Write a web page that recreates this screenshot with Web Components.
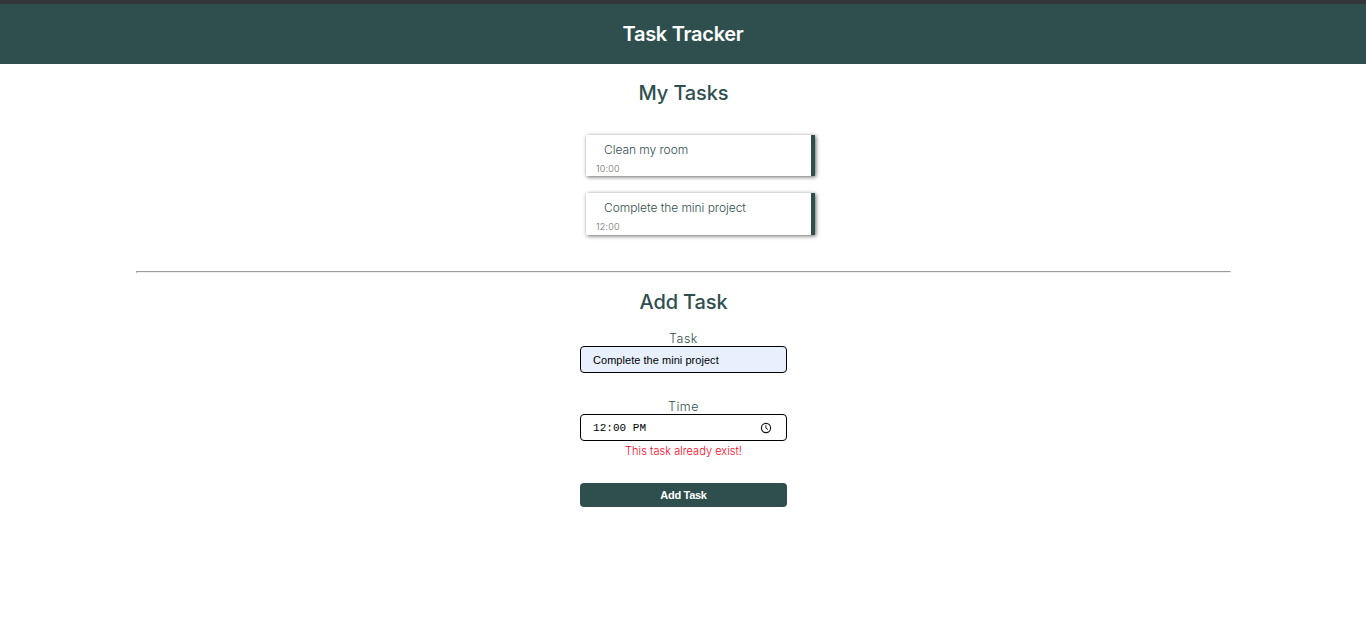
<!DOCTYPE html>
<html lang="en">
<head>
<meta charset="utf-8">
<title>Task Tracker</title>
<style>
body { margin: 0; background: #fff; color: darkslategray; font-family: Inter, "Liberation Sans", sans-serif; }
</style>
</head>
<body>
<task-app></task-app>
<script>
function define(name, html) {
  const template = document.createElement('template');
  template.innerHTML = html;
  customElements.define(name, class extends HTMLElement {
    constructor() {
      super();
      this.attachShadow({ mode: 'open' }).append(template.content.cloneNode(true));
    }
  });
}

define('app-header', `
<style>
:host { display: flex; box-sizing: border-box; height: 64px; border-top: 4px solid #35363a; background: #2f4f4f; align-items: center; justify-content: center; }
h1 { margin: 0; color: #fff; font-size: 20px; line-height: 24px; font-weight: 600; letter-spacing: -0.27px; }
</style>
<h1><slot></slot></h1>`);

define('section-title', `
<style>
:host { display: block; text-align: center; }
h2 { margin: 0; font-size: 20px; line-height: 24px; font-weight: 550; letter-spacing: -0.12px; }
</style>
<h2><slot></slot></h2>`);

define('task-card', `
<style>
:host { display: block; box-sizing: border-box; width: 229px; height: 41.4px; padding: 7px 10px 0; border-right: 4px solid #2f4f4f; background: #fff; box-shadow: 1px 1px 4px rgba(0,0,0,.6); }
.name { padding-left: 8px; font-size: 12px; line-height: 16px; font-weight: 300; letter-spacing: -.05px; white-space: nowrap; }
.time { margin-top: 5px; font-size: 9px; line-height: 12px; font-weight: 300; letter-spacing: .2px; color: #696969; }
</style>
<div class="name"><slot></slot></div>
<div class="time"><slot name="time"></slot></div>`);

define('form-field', `
<style>
:host { display: block; width: 207px; }
.label { margin-bottom: -2px; text-align: center; font-size: 12.5px; line-height: 18px; font-weight: 300; letter-spacing: .45px; }
.box { display: flex; box-sizing: border-box; height: 27px; padding: 0 14px 0 12px; align-items: center; justify-content: space-between; border: 1px solid #000; border-radius: 4px; background: var(--field-bg, #fff); color: #000; font: var(--field-font, 11px "Liberation Sans", sans-serif); letter-spacing: .04px; }
</style>
<div class="label"><slot name="label"></slot></div>
<div class="box"><span><slot></slot></span><slot name="icon"></slot></div>`);

define('clock-icon', `
<style>:host, svg { display: block; width: 12px; height: 12px; }</style>
<svg viewBox="0 0 12 12" fill="none" stroke="#111"><circle cx="6" cy="6" r="4.6" stroke-width="1.1"/><path d="M5.9 3.2v3l2.1 1.3" stroke-width=".9"/></svg>`);

define('submit-button', `
<style>
:host { display: block; width: 207px; }
button { display: block; width: 100%; height: 24px; padding: 0; border: 0; border-radius: 4px; background: #2f4f4f; color: #fff; font: bold 11px "Liberation Sans", sans-serif; letter-spacing: -.3px; }
</style>
<button><slot></slot></button>`);

define('task-app', `
<style>
:host { display: block; height: 617px; overflow: hidden; }
main { display: flex; flex-direction: column; align-items: center; width: 1095px; margin: 0 auto; padding: 17px 0 0 1px; box-sizing: border-box; }
.tasks { display: grid; gap: 16.8px; margin: 30px 0 0 34px; }
hr { box-sizing: border-box; width: 1095px; height: 2px; margin: 36.5px 0 17px; border: 1px solid; border-color: #9a9a9a #eee #eee #9a9a9a; }
form { display: flex; flex-direction: column; align-items: center; margin-top: 16px; }
form-field + form-field { margin-top: 25px; }
.filled { --field-bg: #e8f0fe; }
.clock { --field-font: 11px "Liberation Mono", monospace; }
.error { margin: 3px 0 25px; color: #ff0020; font-size: 11px; line-height: 14px; font-weight: 300; letter-spacing: .03px; }
</style>
<app-header>Task Tracker</app-header>
<main>
  <section-title>My Tasks</section-title>
  <div class="tasks">
    <task-card>Clean my room<span slot="time">10:00</span></task-card>
    <task-card>Complete the mini project<span slot="time">12:00</span></task-card>
  </div>
  <hr>
  <section-title>Add Task</section-title>
  <form>
    <form-field class="filled"><span slot="label">Task</span>Complete the mini project</form-field>
    <form-field class="clock"><span slot="label">Time</span>12:00 PM<clock-icon slot="icon"></clock-icon></form-field>
    <div class="error">This task already exist!</div>
    <submit-button>Add Task</submit-button>
  </form>
</main>`);
</script>
</body>
</html>
